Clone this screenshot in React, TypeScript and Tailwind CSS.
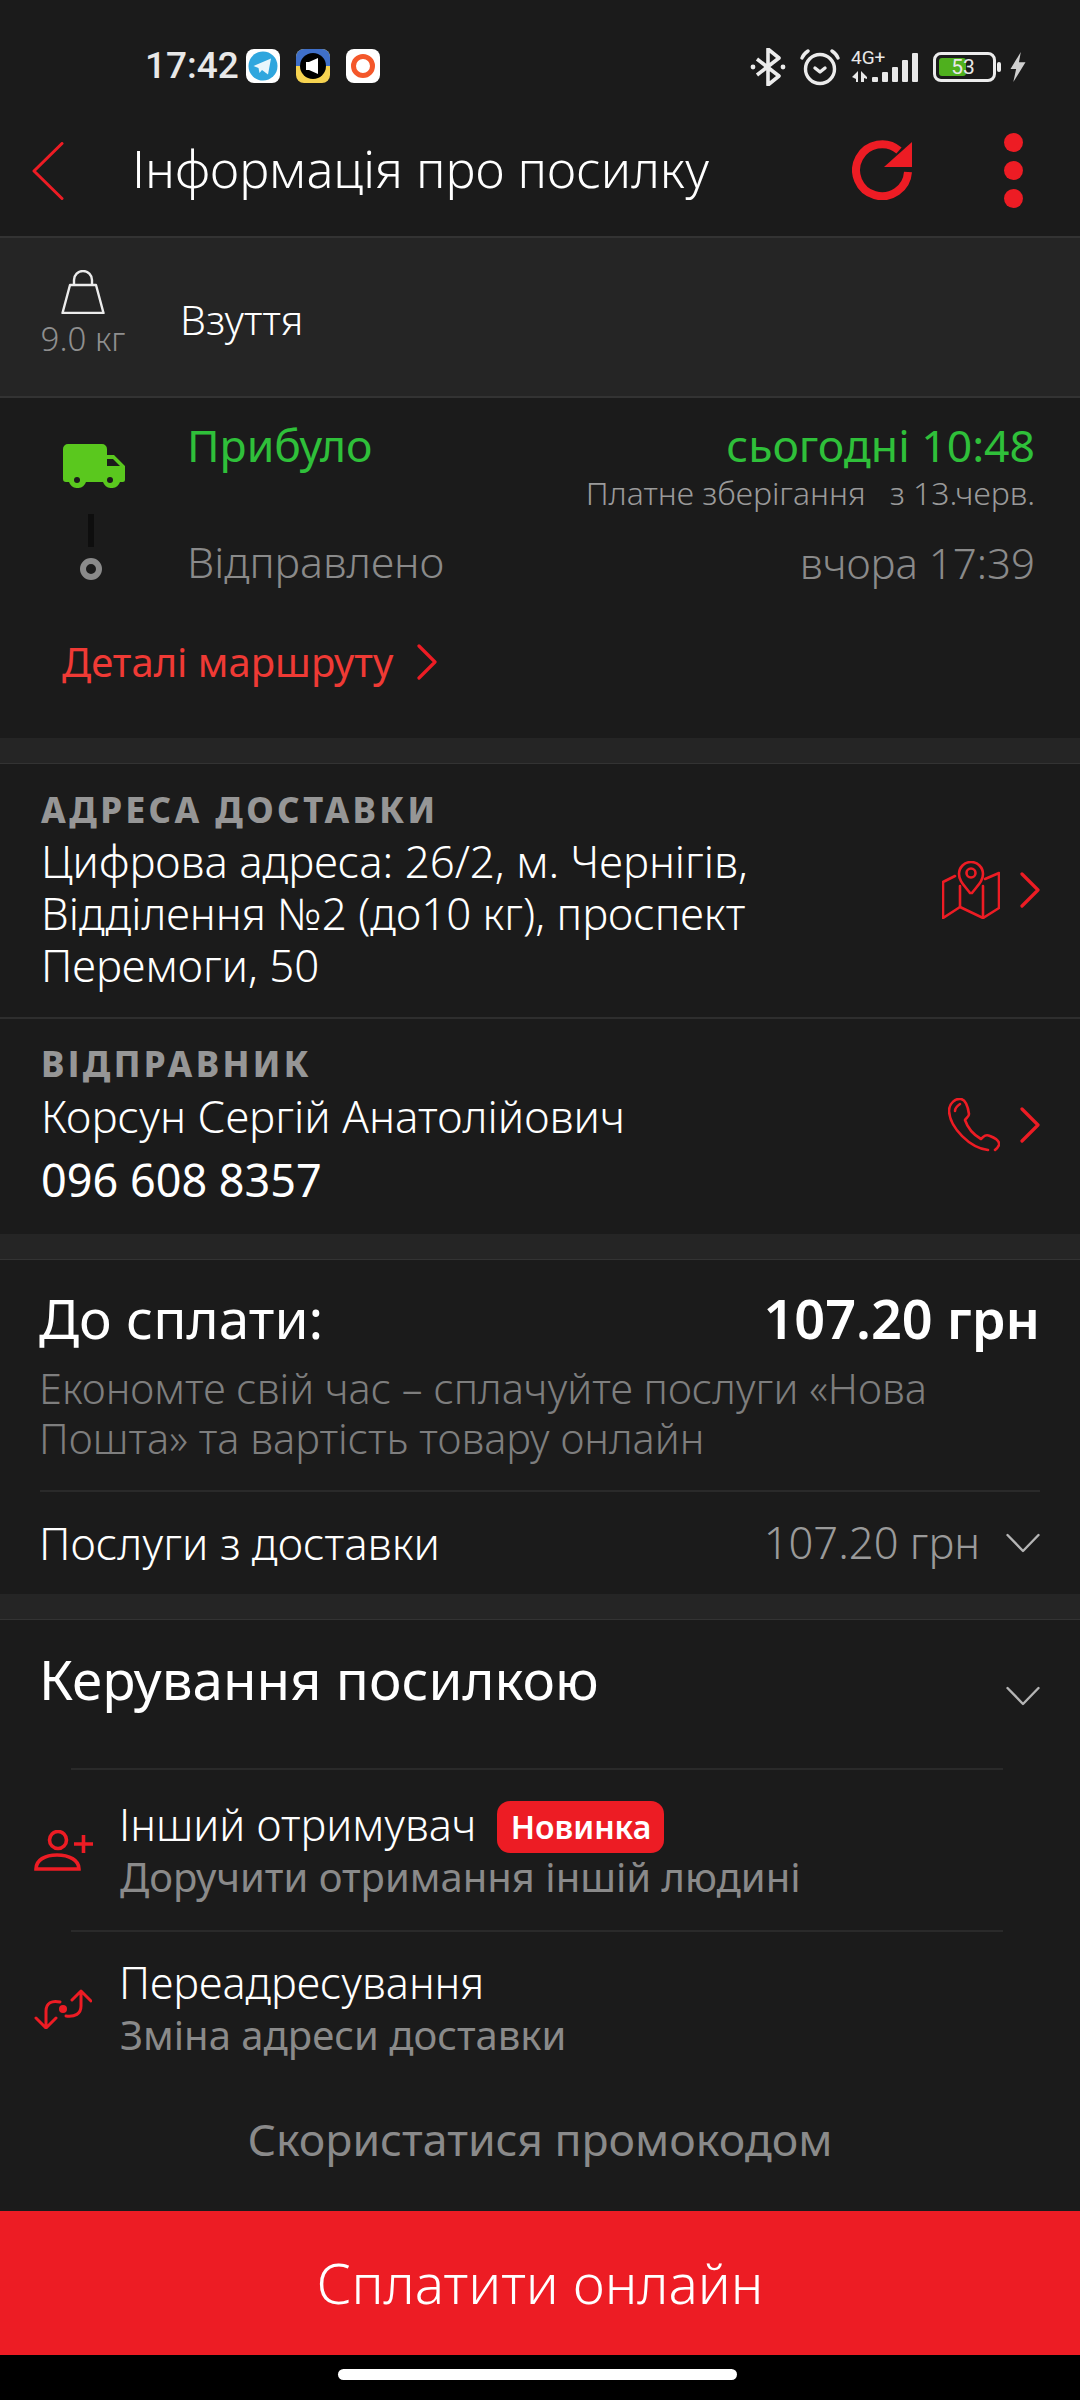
const RED = '#ed1c24';

const Chevron = ({ className = '' }: { className?: string }) => (
  <svg viewBox="0 0 20 36" className={className} fill="none" stroke={RED} strokeWidth="3.2" strokeLinecap="round" strokeLinejoin="round">
    <path d="M2 2l16 16L2 34" />
  </svg>
);

const ChevronDown = ({ color = '#b5b5b5' }: { color?: string }) => (
  <svg viewBox="0 0 34 20" className="w-[34px] h-[20px]" fill="none" stroke={color} strokeWidth="2.4" strokeLinecap="round" strokeLinejoin="round">
    <path d="M1.5 2L17 18 32.5 2" />
  </svg>
);

const StatusBar = () => (
  <div className="h-[133px] shrink-0 flex items-start pt-[48px] pl-[145px] pr-[53px] justify-between">
    <div className="flex items-center h-[36px]">
      <span className="w-[101px] text-[37px] leading-[36px] font-medium text-[#e8e8e8] font-['Roboto',sans-serif]">17:42</span>
      {/* telegram */}
      <div className="w-[34px] h-[34px] rounded-[8px] bg-white flex items-center justify-center">
        <svg viewBox="0 0 30 30" className="w-[30px] h-[30px]">
          <circle cx="15" cy="15" r="14.5" fill="#2fa6de" />
          <path d="M5.5 15L23 7.5l-3 16-6-4.5-2.5 3-1-5z" fill="#e9f6fc" />
        </svg>
      </div>
      {/* alert app */}
      <div className="ml-[16px] w-[34px] h-[34px] rounded-[8px] overflow-hidden relative bg-[#f6d350]">
        <div className="h-[17px] bg-[#3f6fc9]" />
        <svg viewBox="0 0 34 34" className="absolute inset-0 w-[34px] h-[34px]">
          <circle cx="17" cy="17" r="13" fill="#000" />
          <path d="M10 13h3l9-4v16l-9-4h-3z" fill="#fff" />
        </svg>
      </div>
      {/* orange ring */}
      <div className="ml-[16px] w-[34px] h-[34px] rounded-[8px] bg-white flex items-center justify-center">
        <div className="w-[24px] h-[24px] rounded-full border-[5px] border-[#f4572a]" />
      </div>
    </div>
    <div className="flex items-start">
      <svg viewBox="0 0 36 38" className="w-[36px] h-[38px]" fill="none" stroke="#ececec" strokeWidth="3.6" strokeLinejoin="round">
        <path d="M7 11l22 17-11 9V1l11 9L7 27" />
        <circle cx="3" cy="19" r="2.4" fill="#ececec" stroke="none" />
        <circle cx="33" cy="19" r="2.4" fill="#ececec" stroke="none" />
      </svg>
      <svg viewBox="0 0 40 38" className="ml-[14px] w-[40px] h-[38px]" fill="none" stroke="#ececec" strokeWidth="3.4" strokeLinecap="round" strokeLinejoin="round">
        <circle cx="20" cy="21" r="14.5" />
        <path d="M15 20l5 4 5-4" />
        <path d="M2 10c1-3 3-5 6-7M38 10c-1-3-3-5-6-7" />
      </svg>
      <div className="ml-[11px] w-[69px] h-[36px] relative">
        <span className="absolute left-0 top-[1px] text-[19px] leading-[18px] text-[#e8e8e8] font-['Roboto',sans-serif]">4G+</span>
        <svg viewBox="0 0 69 36" className="w-[69px] h-[36px]" fill="#e8e8e8">
          <path d="M1 29l6-6v11H5v-3zM10 23l6 6v2l-3-1v4h-3z" />
          <rect x="21" y="29" width="6" height="5" rx="1" />
          <rect x="31" y="24" width="6" height="10" rx="1" />
          <rect x="41" y="19" width="6" height="15" rx="1" />
          <rect x="51" y="12" width="6" height="22" rx="1" />
          <rect x="61" y="5" width="6" height="29" rx="1" />
        </svg>
      </div>
      <div className="ml-[13px] mt-[4px] w-[63px] h-[30px] rounded-[8px] border-[3px] border-[#ececec] p-[3px] relative">
        <div className="w-[27px] h-full rounded-[3px] bg-[#4fb01e]" />
        <span className="absolute inset-0 flex items-center justify-center text-[21px] pr-[3px] leading-none text-[#e8e8e8] font-['Roboto',sans-serif]">53</span>
      </div>
      <div className="ml-[1px] mt-[14px] w-[4px] h-[10px] rounded-sm bg-[#ececec]" />
      <svg viewBox="0 0 18 32" className="ml-[8px] mt-[4px] w-[18px] h-[30px]" fill="#cfcfcf">
        <path d="M12 0L1 18h6l-3 14L17 11h-7z" />
      </svg>
    </div>
  </div>
);

const Header = () => (
  <div className="h-[103px] shrink-0 flex items-start relative">
    <svg viewBox="0 0 32 58" className="absolute left-[32px] top-[9px] w-[32px] h-[58px]" fill="none" stroke={RED} strokeWidth="3" strokeLinecap="round" strokeLinejoin="round">
      <path d="M30 1.5L2 29l28 27.5" />
    </svg>
    <h1 className="ml-[132px] mt-[6px] text-[50.5px] leading-[60px] font-light text-white">Інформація про посилку</h1>
    <svg viewBox="0 0 60 60" className="absolute left-[852px] top-[7px] w-[60px] h-[60px]" fill="none">
      <path d="M47 10.5A26 26 0 1 0 56 32" stroke={RED} strokeWidth="8" />
      <path d="M60 2v25H32z" fill={RED} />
    </svg>
    <div className="absolute left-[1004px] top-0 flex flex-col gap-[9px]">
      <div className="w-[19px] h-[19px] rounded-full bg-[#ed1c24]" />
      <div className="w-[19px] h-[19px] rounded-full bg-[#ed1c24]" />
      <div className="w-[19px] h-[19px] rounded-full bg-[#ed1c24]" />
    </div>
  </div>
);

const Gap = () => <div className="h-[26px] shrink-0 bg-[#252525] border-b border-[#333333]" />;

const Label = ({ children }: { children: string }) => (
  <div className="text-[35px] leading-[44px] font-extrabold tracking-[3.4px] text-[#969696]">{children}</div>
);

const RowIcons = ({ children }: { children: React.ReactNode }) => (
  <div className="flex items-center gap-[20px]">
    {children}
    <Chevron className="w-[20px] h-[36px]" />
  </div>
);

const Action = ({ icon, title, sub, badge, top }: { icon: React.ReactNode; title: string; sub: string; badge?: boolean; top: string }) => (
  <div className="h-[160px] flex items-start pl-[34px]">
    <div className="w-[86px] h-full flex items-center pt-[4px]">{icon}</div>
    <div className={top}>
      <div className="flex items-start h-[52px]">
        <span className="text-[43.4px] leading-[52px] font-light text-white -ml-[1px]">{title}</span>
        {badge && (
          <span className="ml-[21px] mt-[2px] w-[167px] h-[52px] flex items-center justify-center rounded-[13px] bg-[#ed1c24] text-[32px] font-semibold text-white">Новинка</span>
        )}
      </div>
      <div className="text-[40px] leading-[52px] font-normal text-[#8a8a8a]">{sub}</div>
    </div>
  </div>
);

export default function App() {
  return (
    <div className="w-[1080px] h-[2400px] flex flex-col bg-[#1b1b1b] overflow-hidden font-['Noto_Sans',sans-serif]">
      <StatusBar />
      <Header />

      {/* weight + description */}
      <div className="h-[162px] shrink-0 bg-[#252525] border-y-2 border-[#333333] flex items-start">
        <div className="w-[180px] pt-[32px] flex flex-col items-center pr-[14px]">
          <svg viewBox="0 0 44 44" className="w-[44px] h-[44px]" fill="none" stroke="#ececec" strokeWidth="2.4" strokeLinejoin="round">
            <path d="M13 15v-5a9 9 0 0 1 18 0v5M9 15h26l7.5 28h-41z" />
          </svg>
          <span className="text-[33px] leading-[40px] mt-[5px] font-light text-[#8f8f8f]">9.0 кг</span>
        </div>
        <span className="mt-[56px] text-[41px] leading-[50px] font-light text-white">Взуття</span>
      </div>

      {/* tracking */}
      <div className="h-[340px] shrink-0 flex flex-col">
        <div className="flex pt-[21px] pr-[45px]">
          <div className="w-[188px] pl-[63px] pt-[25px] flex flex-col">
            <svg viewBox="0 0 62 44" className="w-[62px] h-[44px]" fill="#5ac81e">
              <path d="M0 5a5 5 0 0 1 5-5h34a5 5 0 0 1 5 5v6h7l11 11v14a2 2 0 0 1-2 2h-3a9 9 0 0 1-17 0H23a9 9 0 0 1-17 0H3a3 3 0 0 1-3-3z" />
              <path d="M44 15h6l7 7H44z" fill="#1b1b1b" />
              <circle cx="14" cy="36" r="3" fill="#1b1b1b" />
              <circle cx="47" cy="36" r="3" fill="#1b1b1b" />
            </svg>
            <div className="ml-[25px] mt-[26px] w-[6px] h-[33px] bg-[#0e0e0e]" />
            <div className="ml-[17px] mt-[11px] w-[22px] h-[22px] rounded-full border-[6px] border-[#8a8a8a]" />
          </div>
          <div className="flex-1">
            <div className="flex justify-between items-center h-[52px]">
              <span className="text-[44.5px] leading-[52px] font-normal text-[#2fc03a] -ml-[1px]">Прибуло</span>
              <span className="text-[44.5px] leading-[52px] font-normal text-[#2fc03a]">сьогодні 10:48</span>
            </div>
            <div className="flex justify-end text-[32px] leading-[40px] font-light text-[#9a9a9a] mt-[2px] gap-[24px]">
              <span>Платне зберігання</span>
              <span>з 13.черв.</span>
            </div>
            <div className="flex justify-between items-center h-[58px] mt-[20px]">
              <span className="text-[43px] font-light text-[#8a8a8a] -ml-[1px]">Відправлено</span>
              <span className="text-[42px] font-light text-[#8a8a8a]">вчора 17:39</span>
            </div>
          </div>
        </div>
        <div className="flex items-center gap-[24px] pl-[62px] mt-[45px]">
          <span className="text-[40px] leading-[52px] text-[#ef3a35] font-normal">Деталі маршруту</span>
          <Chevron className="w-[20px] h-[44px]" />
        </div>
      </div>

      <Gap />

      {/* delivery address */}
      <div className="h-[255px] shrink-0 border-b-2 border-[#2e2e2e] pl-[41px] pr-[40px] pt-[24px] flex justify-between">
        <div>
          <Label>АДРЕСА ДОСТАВКИ</Label>
          <div className="text-[43.8px] leading-[52px] font-light text-white mt-[3px]">
            Цифрова адреса: 26/2, м. Чернігів,<br />Відділення №2 (до10 кг), проспект<br />Перемоги, 50
          </div>
        </div>
        <div className="pt-[73px]">
          <RowIcons>
            <svg viewBox="0 0 58 58" className="w-[58px] h-[58px]" fill="none" stroke={RED} strokeWidth="2.6" strokeLinecap="round" strokeLinejoin="round">
              <path d="M13 15L1 21v36l17-11 23 11 16-10V12l-14 6" />
              <path d="M18 25v21M41 25v32" />
              <path d="M28 32C22 24 17 20 17 13a12 12 0 0 1 24 0c0 7-5 11-11 19z" />
              <circle cx="29" cy="12" r="4.5" />
            </svg>
          </RowIcons>
        </div>
      </div>

      {/* sender */}
      <div className="h-[215px] shrink-0 pl-[41px] pr-[40px] pt-[23px] flex justify-between">
        <div>
          <Label>ВІДПРАВНИК</Label>
          <div className="text-[44px] leading-[52px] font-light text-white mt-[4px]">Корсун Сергій Анатолійович</div>
          <div className="text-[45px] leading-[52px] text-white mt-[12px]">096 608 8357</div>
        </div>
        <div className="pt-[56px]">
          <RowIcons>
            <svg viewBox="0 0 52 54" className="w-[52px] h-[54px]" fill="none" stroke={RED} strokeWidth="2.6" strokeLinecap="round" strokeLinejoin="round">
              <path d="M40 52C22 50 2 30 1 13 1 5 8 0 13 1c5 1 7 8 8 15 0 3-3 4-4 6 3 9 9 15 16 19 3-3 5-5 9-3 5 2 10 5 9 9-1 2-2 4-4 5" />
              <path d="M7 13c0-3 2-5 5-7" />
            </svg>
          </RowIcons>
        </div>
      </div>

      <Gap />

      {/* payment */}
      <div className="h-[334px] shrink-0 flex flex-col px-[40px]">
        <div className="flex justify-between items-center h-[70px] mt-[23px]">
          <span className="text-[55px] leading-[70px] text-white font-normal -ml-[1px]">До сплати:</span>
          <span className="text-[54px] leading-[70px] text-white font-semibold">107.20 грн</span>
        </div>
        <div className="text-[41.6px] leading-[50px] font-light text-[#7e7e7e] mt-[10px] -ml-[1px]">
          Економте свій час – сплачуйте послуги «Нова<br />Пошта» та вартість товару онлайн
        </div>
        <div className="h-[2px] bg-[#2a2a2a] mt-[27px]" />
        <div className="flex justify-between items-center h-[106px]">
          <span className="text-[44px] font-light text-white -ml-[1px]">Послуги з доставки</span>
          <div className="flex items-center gap-[26px]">
            <span className="text-[43.5px] font-light text-[#9a9a9a]">107.20 грн</span>
            <ChevronDown />
          </div>
        </div>
      </div>

      <Gap />

      {/* manage */}
      <div className="flex-1 flex flex-col">
        <div className="h-[148px] shrink-0 flex justify-between px-[40px] pt-[29px]">
          <span className="text-[54.7px] leading-[60px] text-white -ml-[1px]">Керування посилкою</span>
          <div className="pt-[37px]"><ChevronDown /></div>
        </div>
        <div className="h-[2px] ml-[71px] mr-[77px] bg-[#2a2a2a]" />
        <Action
          title="Інший отримувач"
          sub="Доручити отримання іншій людині"
          badge
          top="pt-[29px]"
          icon={
            <svg viewBox="0 0 60 42" className="w-[60px] h-[42px] -mt-[2px]" fill="none" stroke={RED} strokeWidth="3.6">
              <circle cx="24" cy="10" r="8.5" />
              <path d="M2 39c0-9 9-14 21-14s22 5 22 14z" />
              <path d="M40 14h19M49.5 5v18" />
            </svg>
          }
        />
        <div className="h-[2px] ml-[71px] mr-[77px] bg-[#2a2a2a]" />
        <Action
          title="Переадресування"
          sub="Зміна адреси доставки"
          top="pt-[25px]"
          icon={
            <svg viewBox="0 0 58 40" className="w-[58px] h-[40px] -mt-[10px]" fill="none" stroke={RED} strokeWidth="3" strokeLinecap="round" strokeLinejoin="round">
              <path d="M2 29l10 10 10-10M12 39V22C12 14 18 11 26 13" />
              <path d="M38 11l9-9 10 10M47 2v15c0 8-6 11-15 10" />
              <circle cx="29" cy="20" r="4" fill={RED} stroke="none" />
            </svg>
          }
        />
        <div className="flex-1 flex items-center justify-center pb-[25px]">
          <span className="text-[44.6px] font-normal text-[#8a8a8a]">Скористатися промокодом</span>
        </div>
      </div>

      <button className="h-[144px] shrink-0 bg-[#ed1c24] text-[55px] font-light text-white">Сплатити онлайн</button>
      <div className="h-[45px] shrink-0 bg-black flex justify-center pt-[14px] pr-[6px]">
        <div className="w-[399px] h-[11px] rounded-full bg-white" />
      </div>
    </div>
  );
}
